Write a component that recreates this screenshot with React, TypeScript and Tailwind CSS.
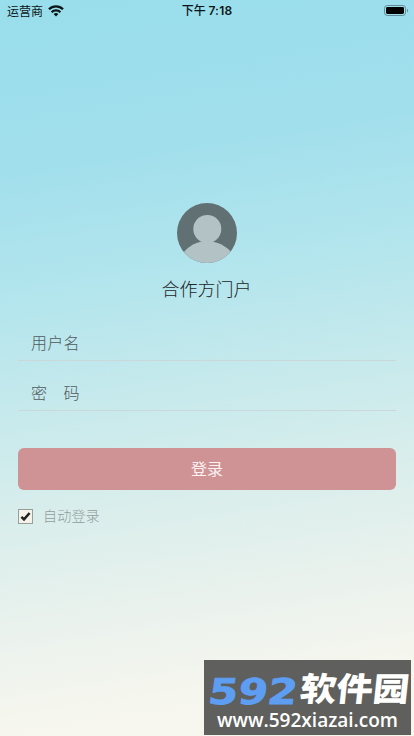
import { useState } from "react";

function WifiIcon() {
    return (
        <svg className="w-[16px] h-[12px]" viewBox="0 0 16 12" fill="none" stroke="#0b1416" strokeWidth="2.3">
            <path d="M1 4.3a10 10 0 0 1 14 0" />
            <path d="M3.6 7.2a6.3 6.3 0 0 1 8.8 0" />
            <path d="M8 11.6 5.6 9.1a3.4 3.4 0 0 1 4.8 0z" fill="#0b1416" stroke="none" />
        </svg>
    );
}

function BatteryIcon() {
    return (
        <svg className="w-[25px] h-[12px]" viewBox="0 0 25 12">
            <rect x="0.5" y="0.5" width="21" height="10" rx="2.8" fill="none" stroke="#5f8b94" />
            <rect x="2" y="2" width="18" height="7" rx="1.4" fill="#000" />
            <path d="M23 3.8v3.6a2 2 0 0 0 0-3.6z" fill="#5f8b94" />
        </svg>
    );
}

function StatusBar() {
    return (
        <header className="grid grid-cols-3 items-center h-[21px] pl-[7px] pr-[5px] text-[#0b1416]">
            <div className="flex items-center gap-[5px] text-[12px] leading-none">
                <span>运营商</span>
                <WifiIcon />
            </div>
            <span className="text-center text-[12px] leading-none font-medium whitespace-nowrap -ml-[2px]">
                下午 <span className="font-['Inter'] font-semibold tracking-[0.2px]">7:18</span>
            </span>
            <div className="flex justify-end">
                <BatteryIcon />
            </div>
        </header>
    );
}

function Avatar() {
    return (
        <svg className="w-[60px] h-[60px] rounded-full" viewBox="0 0 60 60">
            <rect width="60" height="60" fill="#617073" />
            <circle cx="30.3" cy="26" r="14" fill="#b3c2c5" />
            <path d="M7 49c5-6 13-11 23-11s19 5 24 11v11H7z" fill="#b3c2c5" />
        </svg>
    );
}

function Watermark() {
    return (
        <div className="absolute left-[204px] top-[660px] w-[207px] h-[75px] bg-[#5f5f5d] overflow-hidden">
            <svg className="w-full h-full" viewBox="0 0 207 75">
                <g transform="translate(3 43.5) skewX(-8)">
                    <text x="0" y="0" fontFamily="DejaVu Sans" fontWeight="700" fontSize="35.5" textLength="89" lengthAdjust="spacingAndGlyphs" fill="#5e9ef2" stroke="#5e9ef2" strokeWidth="0.8">592</text>
                </g>
                <g transform="translate(95 41) skewX(-6)">
                    <text x="0" y="0" fontFamily="Noto Sans CJK SC" fontWeight="900" fontSize="33" textLength="109" lengthAdjust="spacingAndGlyphs" fill="#fff">软件园</text>
                </g>
                <text x="13" y="67" fontFamily="Open Sans" fontWeight="600" fontSize="20" textLength="181" lengthAdjust="spacingAndGlyphs" fill="#fff">www.592xiazai.com</text>
            </svg>
        </div>
    );
}

const fieldClass =
    "block w-full h-[36px] pl-[13px] pb-[2px] bg-transparent border-b border-[#cbd8d9] outline-none text-[16px] font-light tracking-[0.3px] text-[#4f5a5d] placeholder:text-[#4f5a5d] placeholder:opacity-100";

export default function App() {
    const [autoLogin, setAutoLogin] = useState(true);

    return (
        <div className="relative w-full h-[736px] overflow-hidden font-['Noto_Sans_CJK_SC',sans-serif] bg-[linear-gradient(171deg,#99deec_0%,#a2dfec_22%,#b2e5ed_37%,#c5e9ec_51%,#daeeec_66%,#ebf2ed_80%,#f5f6ee_90%,#f8f7ee_100%)]">
            <StatusBar />

            <main className="flex flex-col px-[18px] pt-[182px]">
                <div className="flex flex-col items-center">
                    <Avatar />
                    <h1 className="mt-[11px] -ml-px text-[18px] leading-[28px] font-light text-[#1c2628]">合作方门户</h1>
                </div>

                <form className="flex flex-col mt-[23px]" onSubmit={(e) => e.preventDefault()}>
                    <input className={fieldClass} placeholder="用户名" />
                    <input className={`${fieldClass} mt-[14px]`} type="password" placeholder="密　码" />

                    <button className="mt-[37px] h-[42px] pb-[2px] rounded-[6px] bg-[#cf9396] text-[16px] text-[#fbf1f1]">
                        登录
                    </button>

                    <label className="flex items-center mt-[15px] h-[22px]">
                        <input
                            type="checkbox"
                            className="sr-only"
                            checked={autoLogin}
                            onChange={(e) => setAutoLogin(e.target.checked)}
                        />
                        <span className="flex items-center justify-center w-[15px] h-[15px] border border-[#979f9b] bg-[#f5f3e9]">
                            {autoLogin && (
                                <svg className="w-[11px] h-[11px]" viewBox="0 0 11 11">
                                    <path d="M1.4 5.8 4 8.4 9.6 2" fill="none" stroke="#202321" strokeWidth="2.5" />
                                </svg>
                            )}
                        </span>
                        <span className="ml-[10px] pb-[2px] text-[14px] font-light tracking-[0.2px] text-[#929d9b]">自动登录</span>
                    </label>
                </form>
            </main>

            <Watermark />
        </div>
    );
}
